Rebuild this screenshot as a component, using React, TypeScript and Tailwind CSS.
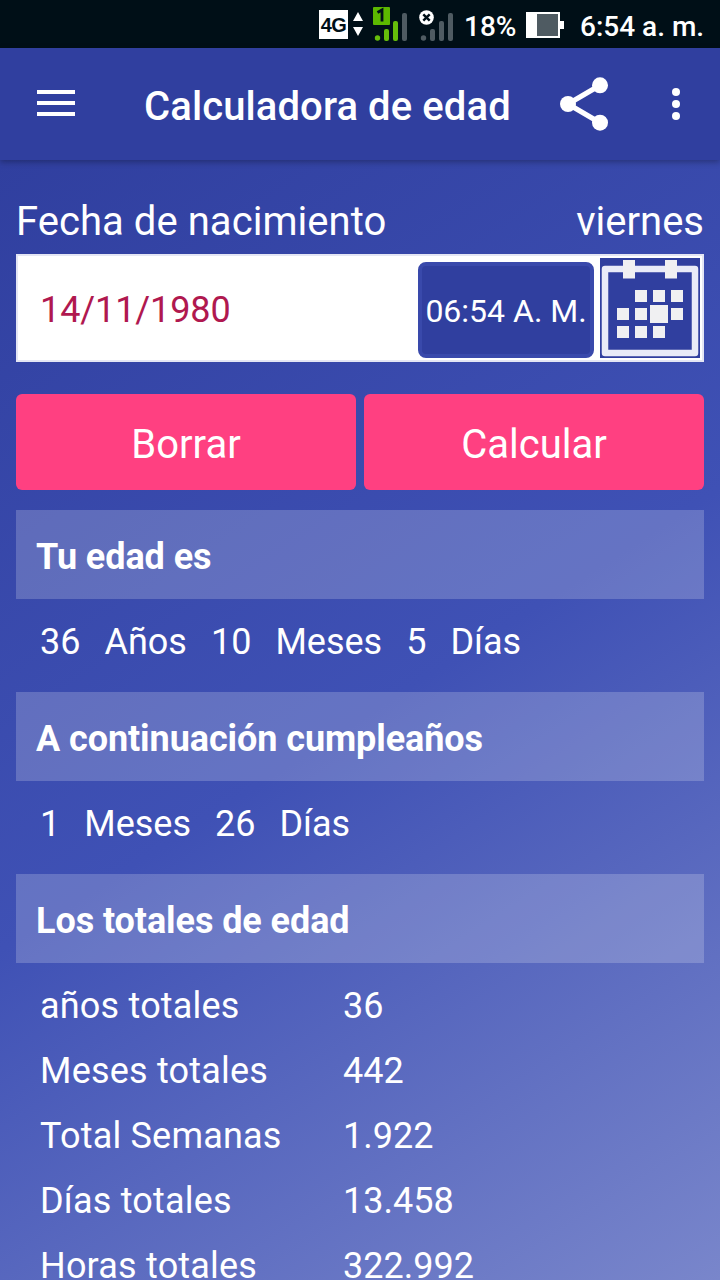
/**
 * App.tsx
 *
 * Age calculator screen: status bar, app bar, birth date form
 * and the list of computed results.
 */

interface ResultPart {
  value: string;
  unit: string;
}

interface TotalRow {
  label: string;
  value: string;
}

const age: ResultPart[] = [
  { value: '36', unit: 'Años' },
  { value: '10', unit: 'Meses' },
  { value: '5', unit: 'Días' },
];

const nextBirthday: ResultPart[] = [
  { value: '1', unit: 'Meses' },
  { value: '26', unit: 'Días' },
];

const totals: TotalRow[] = [
  { label: 'años totales', value: '36' },
  { label: 'Meses totales', value: '442' },
  { label: 'Total Semanas', value: '1.922' },
  { label: 'Días totales', value: '13.458' },
  { label: 'Horas totales', value: '322.992' },
];

function StatusBar() {
  return (
    <header className="flex h-12 shrink-0 items-center bg-[#000f17] text-[28px] font-medium leading-none text-white">
      <div className="ml-[319px] mt-px flex h-[29px] w-[29px] items-center justify-center bg-white font-['Liberation_Sans'] text-[20px] font-bold tracking-[-0.5px] text-[#000f17]">
        4G
      </div>
      {/* Data arrows and both SIM signals */}
      <svg className="ml-1 h-12 w-[108px] shrink-0" viewBox="352 0 108 48" aria-hidden="true">
        <path d="M353 21l5-9 5 9zM353 27l5 9 5-9z" fill="#fff" />
        <rect x="373" y="7" width="17" height="18" rx="1" fill="#5cb800" />
        <path d="M377.500 12.500l4.500-2.500v11.500" fill="none" stroke="#000f17" strokeWidth="2.800" />
        <g fill="#66bd0a">
          <circle cx="377.500" cy="38" r="2.700" />
          <rect x="384" y="29" width="5" height="12" rx="2" />
          <rect x="393" y="21" width="5" height="20" rx="2" />
        </g>
        <g fill="#4f5b62">
          <rect x="402" y="13" width="5" height="28" rx="2" />
          <circle cx="423.500" cy="38" r="2.700" />
          <rect x="430" y="29" width="5" height="12" rx="2" />
          <rect x="439" y="21" width="5" height="20" rx="2" />
          <rect x="448" y="13" width="5" height="28" rx="2" />
        </g>
        <circle cx="426.500" cy="17.500" r="7.300" fill="#fff" />
        <path d="M423.300 14.300l6.400 6.400M429.700 14.300l-6.400 6.400" stroke="#000f17" strokeWidth="2.400" />
      </svg>
      <span className="ml-1 mt-1.5 w-[54px] whitespace-nowrap">18%</span>
      <svg className="ml-2 mt-0.5 h-[26px] w-[38px] shrink-0" viewBox="0 0 38 26" aria-hidden="true">
        <path d="M0 0h34v9h4v8h-4v9H0z" fill="#fff" />
        <path d="M11 2h21v22H11z" fill="#4f5b62" />
      </svg>
      <span className="ml-4 mt-1.5 whitespace-nowrap">6:54 a. m.</span>
    </header>
  );
}

function AppBar() {
  return (
    <div className="z-10 flex h-28 shrink-0 items-center bg-[#303f9f] text-white shadow-[0_2px_6px_rgba(0,0,0,0.3)]">
      <button className="mb-0.5 ml-[37px] flex w-[38px] flex-col gap-[7px]" aria-label="Menú">
        <span className="h-1 w-full bg-white" />
        <span className="h-1 w-full bg-white" />
        <span className="h-1 w-full bg-white" />
      </button>
      <h1 className="ml-[69px] mt-1.5 w-[370px] whitespace-nowrap text-[40px] font-medium leading-none tracking-[0.1px]">
        Calculadora de edad
      </h1>
      <button className="ml-[46px]" aria-label="Compartir">
        <svg className="h-[54px] w-12" viewBox="0 0 48 54" fill="#fff" aria-hidden="true">
          <path d="M40 8.300L8 27l32 18.700" fill="none" stroke="#fff" strokeWidth="5.200" />
          <circle cx="40" cy="8.300" r="8" />
          <circle cx="8" cy="27" r="8" />
          <circle cx="40" cy="45.700" r="8" />
        </svg>
      </button>
      <button className="ml-16 flex flex-col gap-1" aria-label="Más opciones">
        <span className="size-2 rounded-full bg-white" />
        <span className="size-2 rounded-full bg-white" />
        <span className="size-2 rounded-full bg-white" />
      </button>
    </div>
  );
}

function CalendarIcon() {
  return (
    <svg className="h-[100px] w-[100px]" viewBox="0 0 100 100" aria-hidden="true">
      <rect width="100" height="100" fill="#303f9f" />
      <rect x="5" y="11" width="90" height="84" fill="none" stroke="#e9ebf8" strokeWidth="6.500" strokeLinejoin="round" />
      <g fill="#f0f0f2">
        <rect x="23" y="2" width="12" height="18.500" />
        <rect x="65" y="2" width="12" height="18.500" />
        <rect x="35" y="32" width="12" height="12" />
        <rect x="53" y="32" width="12" height="12" />
        <rect x="71" y="32" width="12" height="12" />
        <rect x="17" y="50" width="12" height="12" />
        <rect x="35" y="50" width="12" height="12" />
        <rect x="50" y="47" width="18" height="18" />
        <rect x="71" y="50" width="12" height="12" />
        <rect x="17" y="68" width="12" height="12" />
        <rect x="35" y="68" width="12" height="12" />
        <rect x="53" y="68" width="12" height="12" />
      </g>
    </svg>
  );
}

function SectionTitle({ children }: { children: string }) {
  return (
    <h2 className="flex h-[89px] shrink-0 items-center bg-white/20 pl-5 pt-1 text-[36px] font-bold leading-none tracking-[-0.08px]">
      {children}
    </h2>
  );
}

function ResultLine({ parts }: { parts: ResultPart[] }) {
  return (
    <div className="flex h-[93px] shrink-0 items-center gap-6 pl-6 pb-2">
      {parts.map((part) => (
        <div key={part.unit} className="flex gap-6">
          <span>{part.value}</span>
          <span>{part.unit}</span>
        </div>
      ))}
    </div>
  );
}

export default function App() {
  return (
    <div className="flex h-[1280px] w-[720px] flex-col overflow-hidden bg-[#303f9f] font-[Roboto,sans-serif]">
      <StatusBar />
      <AppBar />

      <main className="flex min-h-0 flex-1 flex-col overflow-hidden bg-[linear-gradient(147.3deg,#303f9f,#3f51b5_50%,#7986cb)] px-4 text-[36px] leading-none text-white">
        {/* Birth date form */}
        <div className="mt-9 flex h-[58px] shrink-0 items-center justify-between pb-1.5 text-[40px]">
          <span className="tracking-[0.05px]">Fecha de nacimiento</span>
          <span>viernes</span>
        </div>
        <div className="flex h-[108px] shrink-0 items-center border-2 border-[#e4e6f4] bg-white pr-0.5">
          <span className="flex-1 pl-[22px] pt-1 text-[36px] tracking-[-0.1px] text-[#b0184f]">14/11/1980</span>
          <button className="mr-1.5 mt-1 h-24 w-44 whitespace-nowrap rounded-lg border-4 border-[#3949ab] bg-[#303f9f] pt-0.5 text-[32px]">
            06:54 A. M.
          </button>
          <CalendarIcon />
        </div>
        <div className="mt-8 grid shrink-0 grid-cols-2 gap-2 text-[40px]">
          <button className="h-24 rounded-md bg-[#ff4081] pt-1.5">Borrar</button>
          <button className="h-24 rounded-md bg-[#ff4081] pt-1.5">Calcular</button>
        </div>

        {/* Results */}
        <div className="mt-5 flex flex-col">
          <SectionTitle>Tu edad es</SectionTitle>
          <ResultLine parts={age} />
          <SectionTitle>A continuación cumpleaños</SectionTitle>
          <ResultLine parts={nextBirthday} />
          <SectionTitle>Los totales de edad</SectionTitle>
          <div className="mt-2.5">
            {totals.map((row) => (
              <div key={row.label} className="flex h-[65px] items-center pl-6">
                <span className="w-[303px] tracking-[0.2px]">{row.label}</span>
                <span>{row.value}</span>
              </div>
            ))}
          </div>
        </div>
      </main>
    </div>
  );
}
